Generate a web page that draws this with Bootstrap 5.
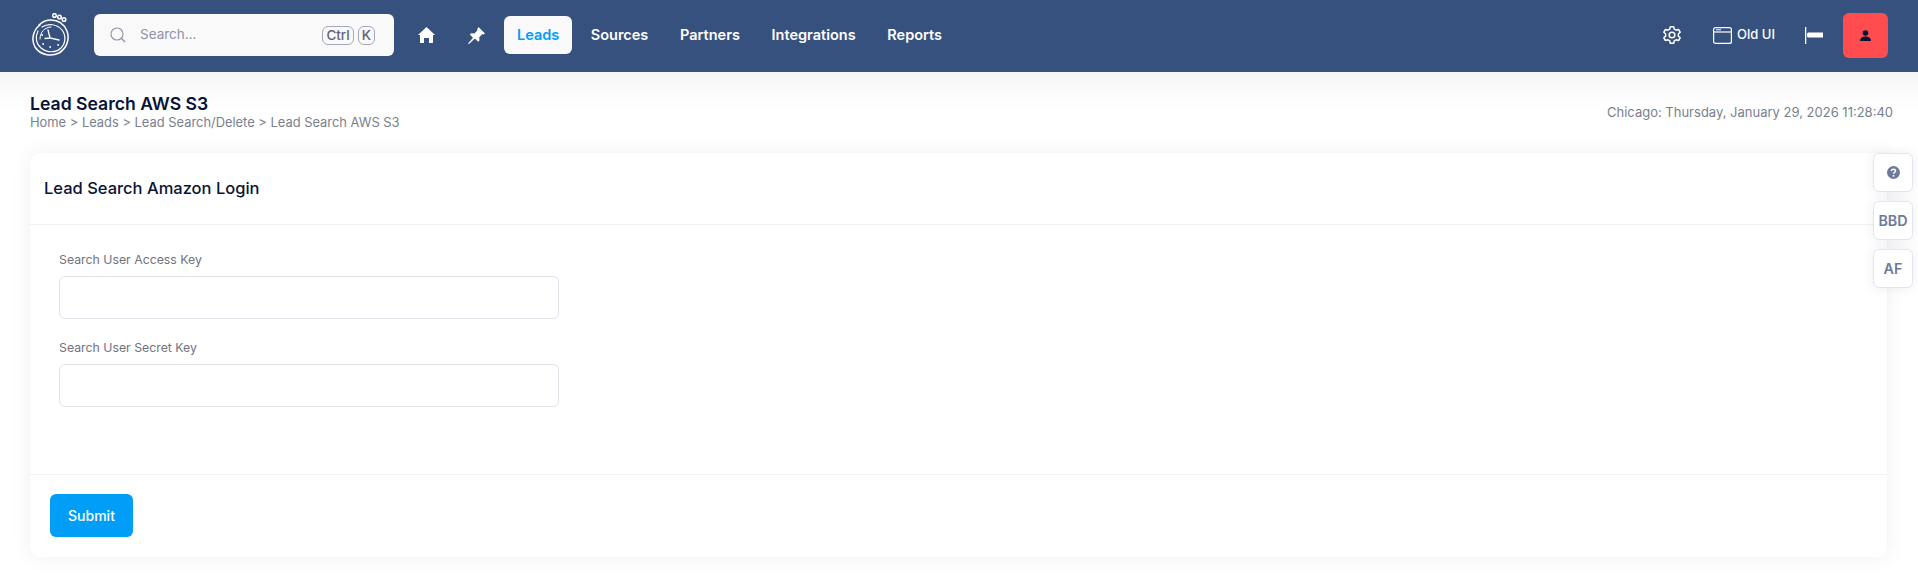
<!DOCTYPE html>
<html lang="en">
<head>
<meta charset="utf-8">
<title>Lead Search AWS S3</title>
<link rel="stylesheet" href="https://cdn.jsdelivr.net/npm/bootstrap@5.3.0/dist/css/bootstrap.min.css">
<style>
html,body{height:100%;overflow:hidden}
body{font-family:Inter,"Liberation Sans",sans-serif;background:#fff;color:#071437;position:relative}
.navbar.top-bar{height:72px;background:#37517e;padding:0 30px 2px 32px;justify-content:flex-start}
.brand-logo{width:38px;height:44px;margin-right:24px;flex:none}
.search-box{width:300px;height:42px;background:#f9f9f9;border-radius:6px;padding:0 19px 0 16px;color:#8e92ab;font-size:13.5px;margin-right:7px;flex:none}
.search-box .ph{margin-left:14px;flex:1;position:relative;top:-1px}
.key-cap{border:1px solid #a5a8bc;border-radius:6px;font-size:13.5px;font-weight:500;color:#5e6278;line-height:15px;padding:1px 3px;margin-left:4px}
.icon-link-top{width:50px;color:#fff;flex:none}
.menu-link{font-size:14.5px;font-weight:600;color:#fff;text-decoration:none;height:38px;padding:0 13.5px;margin-right:4.7px;border-radius:6px;display:flex;align-items:center}
.menu-link.current{background:#f9f9f9;color:#009ef7;margin-left:3px;margin-right:5px;padding:0 13px}
.right-tools{margin-left:auto}
.old-ui{color:#fff;font-size:13px;font-weight:500;gap:5px;margin-left:31px}
.flag-ico{margin-left:30px}
.avatar-btn{width:45px;height:45px;background:#ff4d4f;border-radius:6px;margin-left:20px}
.page-wrap{background:linear-gradient(#f5f5f5,#fff 38px);padding:21px 25px 0 30px;height:81px}
.page-title{font-size:17.6px;font-weight:600;line-height:21px;color:#071437;margin:0}
.crumbs{font-size:12.9px;line-height:16px;color:#7a7f8e;margin-top:1px}
.clock-text{font-size:13px;color:#7a7f8e;margin-top:10px}
.main-card{margin:0 31px 0 30px;height:404px;border:0;border-radius:10px;box-shadow:0 0 20px rgba(76,87,125,.09)}
.main-head{height:72px;padding:0 14px;border-bottom:1px solid #eff2f5}
.main-head h2{font-size:16.5px;font-weight:500;margin:0;color:#071437}
.main-body{height:250px;padding:27px 29px 0;border-bottom:1px solid #eff2f5}
.field-wrap{width:500px;margin-bottom:21px}
.field-label{font-size:12.3px;color:#6f7280;margin-bottom:8px;line-height:16px;display:block}
.field-input{height:43px;border:1px solid #e1e3ea;border-radius:6px}
.main-foot{padding:19px 20px}
.submit-btn{width:83px;height:43px;background:#009ef7;border:0;border-radius:6px;color:#fff;font-size:14px;font-weight:500}
.side-tools{position:absolute;right:5px;top:153px;gap:9px;z-index:5}
.side-btn{width:40px;height:39px;background:#fff;border:1px solid #e4e6ef;border-radius:6px;color:#6d7a9c;font-size:14.3px;font-weight:600;box-shadow:0 0 12px rgba(76,87,125,.1);padding:0}
</style>
</head>
<body>
<nav class="navbar navbar-expand top-bar d-flex flex-nowrap align-items-center">
  <svg class="brand-logo" viewBox="0 0 38 44" fill="none" stroke="#fff" stroke-linecap="round">
    <path d="M8 12C1 17-1 27 3 34c5 8 16 10 24 6 8-5 11-14 8-22-3-7-9-11-16-11-5 0-9 2-12 5" stroke-width="1.500"/>
    <path d="M6 18c-3 6-2 13 3 17 6 5 15 5 20 0 5-5 5-13 1-18-5-6-14-7-20-3" stroke-width="1.200"/>
    <path d="M8 26c0-7 5-12 11-12" stroke-width="1"/>
    <path d="M16 17l2 8 9 2M18 25l-5 .5" stroke-width="1.300"/>
    <circle cx="18" cy="34" r=".5"/><circle cx="11" cy="31" r=".5"/><circle cx="26" cy="32" r=".5"/><circle cx="10" cy="22" r=".5"/>
    <circle cx="22.500" cy="2.500" r="1.800" stroke-width="1.500"/>
    <circle cx="27.500" cy="4" r="1.800" stroke-width="1.500"/>
    <circle cx="32" cy="6.500" r="1.800" stroke-width="1.500"/>
  </svg>
  <div class="search-box d-flex align-items-center">
    <svg width="16" height="16" viewBox="0 0 16 16" fill="none" stroke="#8e92ab" stroke-width="1.100"><circle cx="7" cy="7" r="6"/><path d="M11.500 11.500L15 15" stroke-width="1.400"/></svg>
    <span class="ph">Search...</span>
    <span class="key-cap">Ctrl</span><span class="key-cap">K</span>
  </div>
  <span class="icon-link-top d-flex justify-content-center">
    <svg width="17" height="16" viewBox="0 0 17 16" fill="#fff"><path d="M8.500 0L17 8h-2v8h-4v-5H6v5H2V8H0z"/></svg>
  </span>
  <span class="icon-link-top d-flex justify-content-center">
    <svg width="17" height="17" viewBox="0 0 17 17" fill="#fff"><path d="M10.500 0L17 6.500l-1.600 1-1.200-.3-3 3 .3 3.300-1.400 1.300-3.200-3.200L1 17l-1-.6 5-5.600-3.200-3.200 1.300-1.400 3.300.3 3-3-.2-1.300z"/></svg>
  </span>
  <a class="menu-link current" href="#">Leads</a>
  <a class="menu-link" href="#">Sources</a>
  <a class="menu-link" href="#">Partners</a>
  <a class="menu-link" href="#">Integrations</a>
  <a class="menu-link" href="#">Reports</a>
  <div class="right-tools d-flex align-items-center">
    <svg width="20" height="20" viewBox="0 0 24 24" fill="none" stroke="#fff" stroke-width="1.800" stroke-linejoin="round"><circle cx="12" cy="12" r="3.400"/><path d="M10 2h4l.7 3 2.100 1.200 3-.9 2 3.400-2.200 2.100v2.400l2.200 2.100-2 3.400-3-.9-2.100 1.200-.7 3h-4l-.7-3-2.100-1.200-3 .9-2-3.400 2.200-2.100v-2.400L2.200 8.700l2-3.400 3 .9L9.300 5z"/></svg>
    <span class="old-ui d-flex align-items-center">
      <svg width="19" height="17" viewBox="0 0 19 17" fill="none" stroke="#fff" stroke-width="1.200"><rect x=".6" y=".6" width="17.800" height="15.800" rx="2"/><path d="M.6 5h17.800"/><path d="M3 2.800h5" stroke-width="1"/></svg>
      Old UI
    </span>
    <svg class="flag-ico" width="18" height="17" viewBox="0 0 18 17" fill="#fff"><rect x="0" y="0" width="1.300" height="17"/><path d="M2 6.500l1-1h15v5H3l-1-1z"/></svg>
    <span class="avatar-btn d-flex align-items-center justify-content-center">
      <svg width="11" height="11" viewBox="0 0 11 11" fill="#071437"><circle cx="5.500" cy="3" r="2.800"/><path d="M0 11c0-3 2-4.500 5.500-4.500S11 8 11 11z"/></svg>
    </span>
  </div>
</nav>
<div class="page-wrap d-flex justify-content-between">
  <div>
    <h1 class="page-title">Lead Search AWS S3</h1>
    <div class="crumbs">Home &gt; Leads &gt; Lead Search/Delete &gt; Lead Search AWS S3</div>
  </div>
  <div class="clock-text">Chicago: Thursday, January 29, 2026 11:28:40</div>
</div>
<div class="card main-card">
  <div class="main-head d-flex align-items-center"><h2>Lead Search Amazon Login</h2></div>
  <div class="main-body">
    <div class="field-wrap">
      <label class="field-label" for="ak">Search User Access Key</label>
      <input id="ak" class="form-control field-input" type="text">
    </div>
    <div class="field-wrap">
      <label class="field-label" for="sk">Search User Secret Key</label>
      <input id="sk" class="form-control field-input" type="text">
    </div>
  </div>
  <div class="main-foot"><button class="btn submit-btn" type="button">Submit</button></div>
</div>
<div class="side-tools d-flex flex-column">
  <button class="btn side-btn d-flex align-items-center justify-content-center" type="button" aria-label="Help">
    <svg width="13" height="13" viewBox="0 0 13 13"><circle cx="6.500" cy="6.500" r="6.500" fill="#6d7a9c"/><path d="M4.500 5c0-1.200 1-1.800 2-1.800s2 .6 2 1.700c0 1.500-2 1.400-2 2.800" fill="none" stroke="#fff" stroke-width="1.500"/><rect x="5.700" y="9" width="1.600" height="1.600" fill="#fff"/></svg>
  </button>
  <button class="btn side-btn" type="button">BBD</button>
  <button class="btn side-btn" type="button">AF</button>
</div>
<script src="https://cdn.jsdelivr.net/npm/bootstrap@5.3.0/dist/js/bootstrap.bundle.min.js"></script>
</body>
</html>
